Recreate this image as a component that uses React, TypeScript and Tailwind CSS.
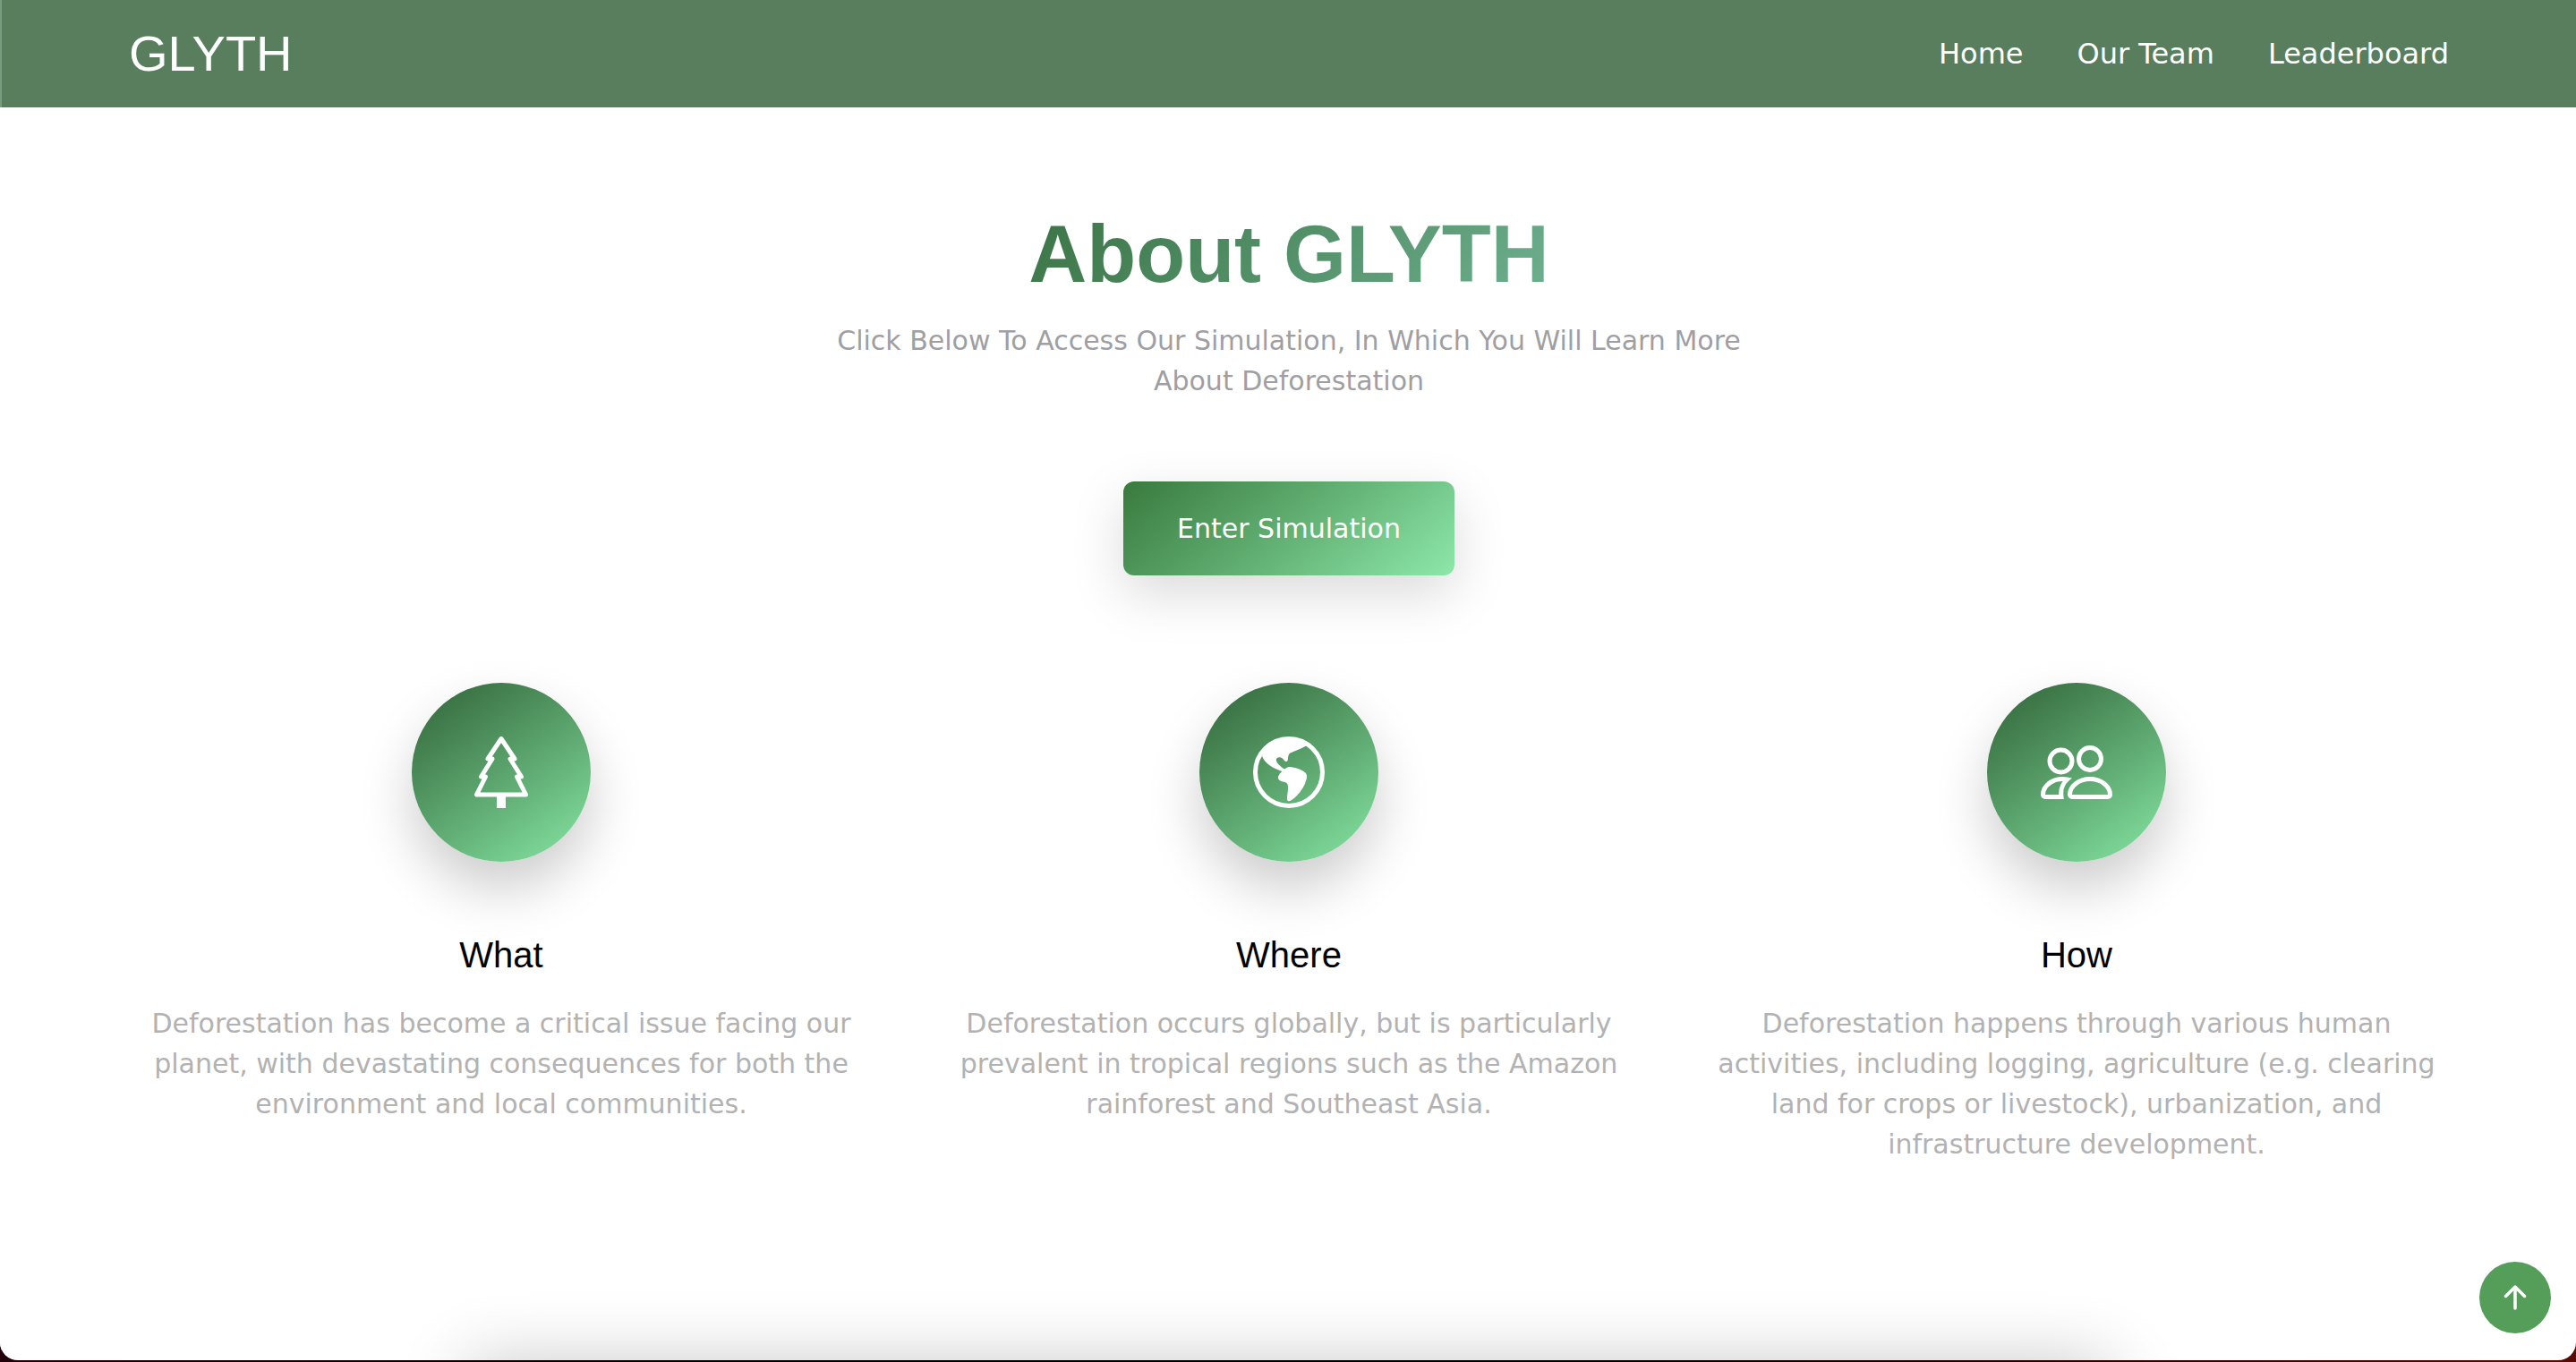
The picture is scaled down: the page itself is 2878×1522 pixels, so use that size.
import type { ReactNode } from "react";

const navLinks = [
  { label: "Home", href: "#home" },
  { label: "Our Team", href: "#team" },
  { label: "Leaderboard", href: "#leaderboard" },
];

function TreeIcon() {
  return (
    <svg viewBox="0 0 16 16" className="size-20" fill="none" stroke="currentColor" strokeLinejoin="round" aria-hidden="true">
      <path d="M8 .5 5 5h1L3.5 9h1l-2 4h11l-2-4h1L10 5h1z" />
      <path d="M7 13h2v3H7z" fill="currentColor" stroke="none" />
    </svg>
  );
}

function GlobeIcon() {
  return (
    <svg viewBox="0 0 16 16" className="size-20" fill="none" stroke="currentColor" aria-hidden="true">
      <circle cx="8" cy="8" r="7.5" />
      <path
        fill="currentColor"
        stroke="none"
        d="M2 4.4C3 2 5 .6 8 .6c1.5 0 2.800.4 4 1.1l-.2.4C10.600 2.900 9.300 3.200 8.300 3.700c-.6.4-.4 1.200-.6 1.700-.2.300-.5.2-.7 0-.4-.5-.8-.9-1.400-.7-.6.2-.5.7-.1 1.300.4.5.9.9 1.500 1.300.4-.2.6-.5 1.100-.5 1.100.1 2.300.4 3.200 1 .6.4.8.8.7 1.400-.3 1.700-1.700 3.900-3.400 5-.4.3-.9.4-1-.1-.1-.8.3-2 .2-2.900 0-.5-.2-.9-.7-1-.6-.1-1.300-.3-1.500-.8-.1-.6.4-1.200.9-1.600C4.700 7.200 2.700 6.200 2 4.400z"
      />
    </svg>
  );
}

function PeopleIcon() {
  return (
    <svg viewBox="0 0 16 16" className="size-20" fill="none" stroke="currentColor" aria-hidden="true">
      <circle cx="4.5" cy="5.5" r="2.5" />
      <circle cx="11" cy="5" r="2.5" />
      <path d="M7 13.5h8a.5.5 0 0 0 .5-.5c0-1.900-2-3.500-4.500-3.500S6.500 11.100 6.500 13a.5.5 0 0 0 .5.500z" />
      <path d="M5.900 9.600C3.200 9.100.5 10.700.5 13a.5.5 0 0 0 .5.5h3.600c-.2-1.500.2-2.900 1.300-3.900z" />
    </svg>
  );
}

const features: { title: string; text: string; icon: ReactNode }[] = [
  {
    title: "What",
    text: "Deforestation has become a critical issue facing our planet, with devastating consequences for both the environment and local communities.",
    icon: <TreeIcon />,
  },
  {
    title: "Where",
    text: "Deforestation occurs globally, but is particularly prevalent in tropical regions such as the Amazon rainforest and Southeast Asia.",
    icon: <GlobeIcon />,
  },
  {
    title: "How",
    text: "Deforestation happens through various human activities, including logging, agriculture (e.g. clearing land for crops or livestock), urbanization, and infrastructure development.",
    icon: <PeopleIcon />,
  },
];

export default function App() {
  return (
    <div className="flex min-h-screen flex-col bg-linear-to-r from-[#22000a] via-black to-[#5a0a04] pb-0.5 font-['Verdana','DejaVu_Sans',sans-serif] text-[30px] leading-[45px]">
      <div className="relative flex grow flex-col overflow-hidden rounded-b-[20px] bg-white">
        <header className="border-l-2 border-[#789a7f] bg-[#587e5e] text-white">
          <div className="mx-auto flex h-[120px] max-w-[2640px] items-center justify-between px-6">
            <a href="#home" className="font-['Liberation_Sans',sans-serif] text-[56px] leading-[60px]">
              GLYTH
            </a>
            <nav className="flex gap-[60px] text-[32px]">
              {navLinks.map((link) => (
                <a key={link.label} href={link.href}>
                  {link.label}
                </a>
              ))}
            </nav>
          </div>
        </header>

        <main className="flex grow flex-col items-center border-l-2 border-white pt-[110px]">
          <h1 className="bg-linear-135 from-[#3a7344] to-[#6eb090] bg-clip-text font-['Liberation_Sans',sans-serif] text-[90px] leading-[108px] font-bold text-transparent">
            About GLYTH
          </h1>
          <p className="mt-5 max-w-[1080px] text-center text-[#9f9fa3]">
            Click Below To Access Our Simulation, In Which You Will Learn More About Deforestation
          </p>
          <button
            type="button"
            className="mt-[90px] rounded-xl bg-linear-140 from-[#397a3e] to-[#8de8aa] px-[60px] py-[30px] text-white shadow-[0_20px_60px_rgba(0,0,0,0.15)]"
          >
            Enter Simulation
          </button>

          <section className="mt-[120px] grid w-full max-w-[2640px] grid-cols-3">
            {features.map((feature) => (
              <article key={feature.title} className="flex flex-col items-center px-6 text-center">
                <div className="flex size-[200px] items-center justify-center rounded-full bg-linear-145 from-[#316338] to-[#87e8a5] text-white shadow-[0_30px_60px_rgba(0,0,0,0.2)]">
                  {feature.icon}
                </div>
                <h2 className="mt-20 font-['Liberation_Sans',sans-serif] text-[40px] leading-[48px] text-black">
                  {feature.title}
                </h2>
                <p className="mt-[30px] text-[#b2b2b2]">{feature.text}</p>
              </article>
            ))}
          </section>

          <div className="mt-auto h-0 w-[61%] shadow-[0_45px_80px_40px_rgba(0,0,0,0.24)]" />
        </main>

        <button
          type="button"
          aria-label="Back to top"
          className="absolute right-7 bottom-[30px] flex size-20 items-center justify-center rounded-full bg-[#549e5a] text-white"
        >
          <svg viewBox="0 0 28 28" className="size-7" fill="none" stroke="currentColor" strokeWidth="3.5" strokeLinecap="round" strokeLinejoin="round" aria-hidden="true">
            <path d="M14 26V2M3.5 12.5 14 2l10.500 10.500" />
          </svg>
        </button>
      </div>
    </div>
  );
}
